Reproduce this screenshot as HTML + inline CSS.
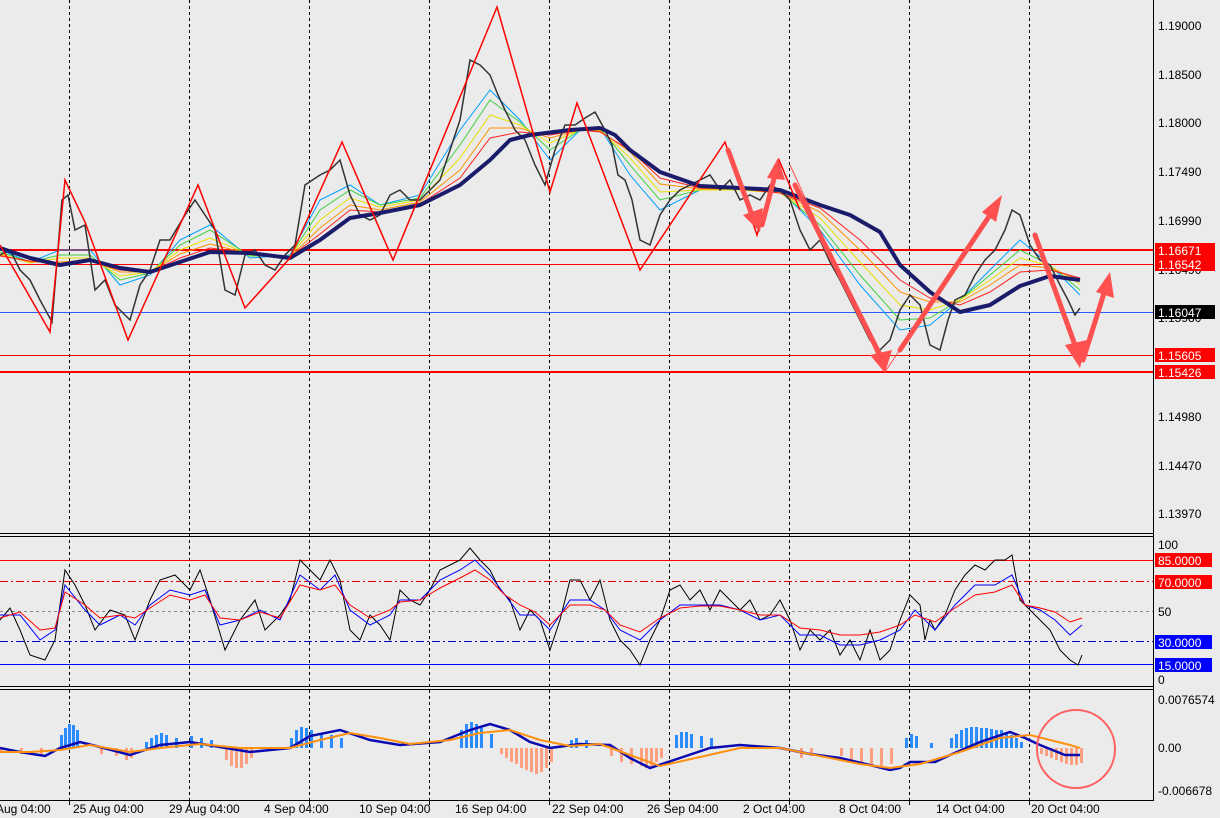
<!DOCTYPE html>
<html><head><meta charset="utf-8"><style>
html,body{margin:0;padding:0;background:#ebebeb;}
svg{display:block;font-family:"Liberation Sans",sans-serif;}
</style></head><body>
<svg width="1220" height="818" viewBox="0 0 1220 818" xmlns="http://www.w3.org/2000/svg">
<rect width="1220" height="818" fill="#ebebeb"/>
<!-- panel frames -->
<g stroke="#000" stroke-width="1" fill="none">
<line x1="0" y1="533.5" x2="1153" y2="533.5"/>
<line x1="0" y1="536.5" x2="1153" y2="536.5"/>
<line x1="0" y1="686.5" x2="1153" y2="686.5"/>
<line x1="0" y1="689.5" x2="1153" y2="689.5"/>
<line x1="0" y1="800.5" x2="1153" y2="800.5"/>
<line x1="1153.5" y1="0" x2="1153.5" y2="801"/>
</g>
<!-- vertical dotted grid -->
<g stroke="#000" stroke-width="1" stroke-dasharray="3,3">
<line x1="69.5" y1="0" x2="69.5" y2="800"/><line x1="189.5" y1="0" x2="189.5" y2="800"/>
<line x1="309.5" y1="0" x2="309.5" y2="800"/><line x1="429.5" y1="0" x2="429.5" y2="800"/>
<line x1="549.5" y1="0" x2="549.5" y2="800"/><line x1="669.5" y1="0" x2="669.5" y2="800"/>
<line x1="789.5" y1="0" x2="789.5" y2="800"/><line x1="909.5" y1="0" x2="909.5" y2="800"/>
<line x1="1029.5" y1="0" x2="1029.5" y2="800"/>
</g>
<!-- horizontal levels -->
<line x1="0" y1="250" x2="1153" y2="250" stroke="#f00" stroke-width="2"/>
<line x1="0" y1="264.5" x2="1153" y2="264.5" stroke="#f00" stroke-width="1"/>
<line x1="0" y1="312.5" x2="1153" y2="312.5" stroke="#2a5cff" stroke-width="1"/>
<line x1="0" y1="355.5" x2="1153" y2="355.5" stroke="#f00" stroke-width="1"/>
<line x1="0" y1="372" x2="1153" y2="372" stroke="#f00" stroke-width="2"/>
<!-- ribbon -->
<g fill="none" stroke-width="1">
<polyline stroke="#00a0ff" points="0,250 30,262 60,250 90,250 120,285 150,275 180,240 210,225 250,258 290,255 320,200 350,185 380,205 420,195 460,130 490,90 520,120 550,160 580,130 600,128 630,175 660,210 700,190 740,190 780,190 820,230 860,285 900,330 930,325 960,300 990,270 1020,240 1050,265 1080,295"/>
<polyline stroke="#40d040" points="0,252 30,262 60,255 90,255 120,280 150,273 180,245 210,230 250,256 290,256 320,210 350,190 380,205 420,198 460,145 490,100 520,122 550,150 580,130 600,128 630,165 660,200 700,190 740,190 780,192 820,225 860,275 900,320 930,318 960,300 990,275 1020,250 1050,265 1080,290"/>
<polyline stroke="#e8e000" points="0,254 30,263 60,258 90,258 120,276 150,272 180,250 210,238 250,255 290,256 320,220 350,198 380,207 420,200 460,158 490,115 520,125 550,143 580,130 600,130 630,158 660,192 700,190 740,190 780,193 820,218 860,262 900,305 930,310 960,300 990,280 1020,258 1050,266 1080,284"/>
<polyline stroke="#ff9000" points="0,255 30,262 60,262 90,260 120,272 150,272 180,254 210,244 250,254 290,257 320,228 350,205 380,210 420,202 460,170 490,128 520,128 550,138 580,130 600,131 630,152 660,184 700,189 740,189 780,193 820,212 860,250 900,292 930,302 960,302 990,285 1020,265 1050,268 1080,280"/>
<polyline stroke="#ff2020" points="0,256 30,261 60,264 90,261 120,270 150,272 180,258 210,248 250,253 290,257 320,234 350,210 380,212 420,204 460,178 490,138 520,132 550,135 580,130 600,132 630,150 660,178 700,188 740,189 780,193 820,208 860,240 900,280 930,298 960,305 990,292 1020,272 1050,270 1080,278"/>
</g>
<!-- price -->
<polyline fill="none" stroke="#333" stroke-width="1.5" points="0,255 10,250 20,270 30,280 40,300 52,322 62,200 68,195 75,230 85,225 95,290 105,280 115,305 130,320 140,285 150,270 160,240 170,240 185,215 195,200 205,215 215,230 225,290 235,295 245,255 255,250 265,265 275,270 285,255 295,245 305,185 320,175 330,170 340,160 350,195 360,215 370,220 380,215 390,195 400,190 410,200 420,200 430,190 440,180 450,150 460,120 470,60 480,65 490,75 498,95 505,110 515,130 525,140 535,165 545,185 555,150 565,125 575,125 585,118 595,112 605,130 612,145 618,175 625,180 632,200 640,240 650,245 660,215 670,200 680,190 690,185 700,180 710,175 720,190 730,180 740,200 750,195 760,200 770,185 780,190 790,200 800,230 810,250 820,240 830,262 840,280 850,300 860,320 870,340 880,350 890,340 900,310 910,295 920,305 930,345 940,350 948,320 955,300 965,295 975,275 985,260 995,250 1005,230 1012,210 1020,215 1030,245 1040,260 1050,265 1060,285 1068,300 1075,315 1080,308"/>
<!-- MA thick -->
<polyline fill="none" stroke="#1b1b6b" stroke-width="4" stroke-linejoin="round" points="0,248 30,258 60,265 90,260 120,268 150,272 180,262 210,252 250,253 290,258 320,240 350,218 380,213 420,205 460,185 490,160 510,140 530,135 570,130 600,128 615,135 630,150 660,172 700,186 740,188 780,190 820,205 850,215 880,232 900,265 930,292 960,312 990,305 1020,286 1050,276 1080,280"/>
<!-- zigzag -->
<polyline fill="none" stroke="#f00" stroke-width="1.5" points="0,245 50,332 65,180 85,222 128,340 198,185 245,308 290,258 342,142 393,260 497,7 550,192 577,103 640,270 725,142 757,235 779,160 800,210"/>
<!-- arrows -->
<g fill="#ff5050" stroke="#ff5050" stroke-width="5" stroke-linecap="round">
<line x1="728" y1="150" x2="752" y2="215"/><polygon points="743,215 760,232 763,208" stroke="none"/>
<line x1="762" y1="225" x2="775" y2="175"/><polygon points="767,178 778,158 785,180" stroke="none"/>
<line x1="795" y1="185" x2="880" y2="355"/><polygon points="870,355 885,373 892,350" stroke="none"/>
<line x1="900" y1="350" x2="990" y2="215"/><polygon points="982,212 1002,195 996,222" stroke="none"/>
<line x1="1035" y1="235" x2="1075" y2="345"/><polygon points="1065,345 1080,368 1087,340" stroke="none"/>
<line x1="1083" y1="360" x2="1105" y2="290"/><polygon points="1096,292 1110,272 1114,298" stroke="none"/>
</g>
<line x1="790" y1="165" x2="885" y2="372" stroke="#ff5050" stroke-width="1"/>
<line x1="885" y1="372" x2="1000" y2="200" stroke="#ff5050" stroke-width="1"/>
<!-- price axis labels -->
<g font-size="12" fill="#000">
<text x="1158" y="30">1.19000</text><text x="1158" y="79">1.18500</text>
<text x="1158" y="127">1.18000</text><text x="1158" y="176">1.17490</text>
<text x="1158" y="225">1.16990</text><text x="1158" y="274">1.16490</text>
<text x="1158" y="322">1.15980</text>
<text x="1158" y="421">1.14980</text><text x="1158" y="470">1.14470</text>
<text x="1158" y="518">1.13970</text>
</g>
<g font-size="12">
<rect x="1155" y="243" width="60" height="14" fill="#f00"/><text x="1158" y="255" fill="#fff">1.16671</text>
<rect x="1155" y="257" width="60" height="14" fill="#f00"/><text x="1158" y="269" fill="#fff">1.16542</text>
<rect x="1155" y="305" width="60" height="14" fill="#000"/><text x="1158" y="317" fill="#fff">1.16047</text>
<rect x="1155" y="348" width="60" height="14" fill="#f00"/><text x="1158" y="360" fill="#fff">1.15605</text>
<rect x="1155" y="365" width="60" height="14" fill="#f00"/><text x="1158" y="377" fill="#fff">1.15426</text>
</g>
<!-- stochastic -->
<line x1="0" y1="560.5" x2="1153" y2="560.5" stroke="#f00"/>
<line x1="0" y1="581.5" x2="1153" y2="581.5" stroke="#e00000" stroke-dasharray="8,3,2,3"/>
<line x1="0" y1="611.5" x2="1153" y2="611.5" stroke="#888" stroke-dasharray="3,3"/>
<line x1="0" y1="641.5" x2="1153" y2="641.5" stroke="#0000c0" stroke-dasharray="8,3,2,3"/>
<line x1="0" y1="664.5" x2="1153" y2="664.5" stroke="#0000ff"/>
<polyline fill="none" stroke="#000" stroke-width="1" points="0,620 10,608 20,630 30,655 45,660 55,640 65,570 75,585 85,605 95,630 110,610 125,615 135,640 150,600 160,580 175,575 190,590 200,570 210,600 225,650 240,620 255,600 265,630 280,615 290,600 300,560 310,570 320,580 330,560 340,580 350,630 360,640 370,615 380,625 390,640 400,590 410,600 420,605 430,590 440,570 450,565 460,560 470,548 480,560 490,570 500,590 510,600 520,630 530,610 540,620 550,650 560,620 570,580 580,580 590,600 600,580 610,620 620,640 630,650 640,665 650,640 660,620 670,590 680,585 690,600 700,590 710,610 720,590 730,600 740,610 750,600 760,620 770,615 780,600 790,620 800,650 810,630 820,640 830,630 840,655 850,640 860,660 870,630 880,660 890,650 900,620 910,595 920,605 925,640 930,620 935,630 945,615 955,590 965,575 975,565 985,570 995,560 1005,560 1012,555 1020,600 1030,610 1040,620 1050,630 1060,650 1070,660 1078,665 1082,655"/>
<polyline fill="none" stroke="#0000ff" stroke-width="1" points="0,615 20,615 40,640 55,630 65,585 85,610 100,625 120,615 135,625 150,605 170,590 190,595 205,590 220,625 240,620 260,610 280,620 300,575 320,590 335,575 350,610 370,625 390,615 400,600 420,600 440,580 460,570 475,560 490,575 505,595 520,615 535,615 550,630 570,600 590,600 605,610 620,630 640,640 660,620 680,605 700,605 720,605 740,610 760,620 780,615 800,635 820,635 840,645 860,645 880,640 900,630 915,610 935,630 955,605 975,585 995,585 1012,575 1025,605 1040,610 1055,620 1070,635 1082,625"/>
<polyline fill="none" stroke="#f00" stroke-width="1" points="0,618 20,612 40,630 55,628 65,592 85,605 100,618 120,615 135,618 150,608 170,595 190,600 205,595 220,618 240,620 260,612 280,618 300,585 320,590 335,585 350,605 370,618 390,610 400,602 420,600 440,588 460,578 475,570 490,580 505,595 520,605 535,612 550,625 570,605 590,605 605,610 620,625 640,632 660,618 680,608 700,606 720,606 740,610 760,615 780,615 800,628 820,630 840,635 860,635 880,632 900,625 915,615 935,622 955,608 975,595 995,592 1012,585 1025,605 1040,608 1055,612 1070,622 1082,618"/>
<g font-size="12">
<text x="1158" y="549">100</text>
<rect x="1155" y="553" width="57" height="14" fill="#f00"/><text x="1158" y="565" fill="#fff">85.0000</text>
<rect x="1155" y="575" width="57" height="14" fill="#f00"/><text x="1158" y="587" fill="#fff">70.0000</text>
<text x="1158" y="616">50</text>
<rect x="1155" y="635" width="57" height="14" fill="#0000ff"/><text x="1158" y="647" fill="#fff">30.0000</text>
<rect x="1155" y="658" width="57" height="14" fill="#0000ff"/><text x="1158" y="670" fill="#fff">15.0000</text>
<text x="1158" y="684">0</text>
</g>
<!-- MACD histogram -->
<g fill="#2b8cff">
<rect x="60" y="735" width="3" height="13"/><rect x="64" y="728" width="3" height="20"/><rect x="68" y="724" width="3" height="24"/><rect x="72" y="725" width="3" height="23"/><rect x="76" y="730" width="3" height="18"/>
<rect x="145" y="742" width="3" height="6"/><rect x="150" y="738" width="3" height="10"/><rect x="155" y="735" width="3" height="13"/><rect x="160" y="733" width="3" height="15"/><rect x="165" y="735" width="3" height="13"/><rect x="175" y="738" width="3" height="10"/><rect x="190" y="736" width="3" height="12"/><rect x="200" y="738" width="3" height="10"/><rect x="210" y="740" width="3" height="8"/>
<rect x="290" y="738" width="3" height="10"/><rect x="295" y="730" width="3" height="18"/><rect x="300" y="727" width="3" height="21"/><rect x="305" y="728" width="3" height="20"/><rect x="310" y="730" width="3" height="18"/><rect x="320" y="733" width="3" height="15"/><rect x="330" y="735" width="3" height="13"/><rect x="340" y="738" width="3" height="10"/>
<rect x="460" y="730" width="3" height="18"/><rect x="465" y="724" width="3" height="24"/><rect x="470" y="722" width="3" height="26"/><rect x="475" y="724" width="3" height="24"/><rect x="480" y="728" width="3" height="20"/><rect x="490" y="734" width="3" height="14"/>
<rect x="570" y="740" width="3" height="8"/><rect x="575" y="738" width="3" height="10"/><rect x="585" y="740" width="3" height="8"/>
<rect x="675" y="735" width="3" height="13"/><rect x="680" y="732" width="3" height="16"/><rect x="685" y="732" width="3" height="16"/><rect x="690" y="734" width="3" height="14"/><rect x="700" y="736" width="3" height="12"/><rect x="710" y="738" width="3" height="10"/>
<rect x="905" y="738" width="3" height="10"/><rect x="910" y="734" width="3" height="14"/><rect x="915" y="736" width="3" height="12"/><rect x="930" y="743" width="3" height="5"/>
<rect x="950" y="738" width="3" height="10"/><rect x="955" y="734" width="3" height="14"/><rect x="960" y="730" width="3" height="18"/><rect x="965" y="728" width="3" height="20"/><rect x="970" y="727" width="3" height="21"/><rect x="975" y="727" width="3" height="21"/><rect x="980" y="728" width="3" height="20"/><rect x="985" y="728" width="3" height="20"/><rect x="990" y="729" width="3" height="19"/><rect x="995" y="730" width="3" height="18"/><rect x="1000" y="730" width="3" height="18"/><rect x="1005" y="732" width="3" height="16"/><rect x="1010" y="735" width="3" height="13"/><rect x="1015" y="738" width="3" height="10"/><rect x="1020" y="742" width="3" height="6"/>
</g>
<g fill="#ffa080">
<rect x="0" y="748" width="3" height="4"/><rect x="20" y="748" width="3" height="6"/><rect x="40" y="748" width="3" height="8"/>
<rect x="100" y="748" width="3" height="6"/><rect x="115" y="748" width="3" height="8"/><rect x="125" y="748" width="3" height="12"/><rect x="130" y="748" width="3" height="10"/>
<rect x="225" y="748" width="3" height="12"/><rect x="230" y="748" width="3" height="18"/><rect x="235" y="748" width="3" height="20"/><rect x="240" y="748" width="3" height="20"/><rect x="245" y="748" width="3" height="16"/><rect x="250" y="748" width="3" height="10"/>
<rect x="500" y="748" width="3" height="6"/><rect x="505" y="748" width="3" height="10"/><rect x="510" y="748" width="3" height="14"/><rect x="515" y="748" width="3" height="16"/><rect x="520" y="748" width="3" height="20"/><rect x="525" y="748" width="3" height="22"/><rect x="530" y="748" width="3" height="24"/><rect x="535" y="748" width="3" height="26"/><rect x="540" y="748" width="3" height="24"/><rect x="545" y="748" width="3" height="20"/><rect x="550" y="748" width="3" height="14"/>
<rect x="610" y="748" width="3" height="8"/><rect x="620" y="748" width="3" height="14"/><rect x="630" y="748" width="3" height="16"/><rect x="640" y="748" width="3" height="18"/><rect x="645" y="748" width="3" height="20"/><rect x="650" y="748" width="3" height="18"/><rect x="655" y="748" width="3" height="14"/><rect x="660" y="748" width="3" height="10"/>
<rect x="800" y="748" width="3" height="10"/><rect x="810" y="748" width="3" height="8"/><rect x="840" y="748" width="3" height="8"/><rect x="850" y="748" width="3" height="12"/><rect x="860" y="748" width="3" height="16"/><rect x="870" y="748" width="3" height="18"/><rect x="880" y="748" width="3" height="18"/><rect x="890" y="748" width="3" height="16"/>
<rect x="1040" y="748" width="3" height="6"/><rect x="1045" y="748" width="3" height="8"/><rect x="1050" y="748" width="3" height="10"/><rect x="1055" y="748" width="3" height="12"/><rect x="1060" y="748" width="3" height="14"/><rect x="1065" y="748" width="3" height="16"/><rect x="1070" y="748" width="3" height="17"/><rect x="1075" y="748" width="3" height="17"/><rect x="1080" y="748" width="3" height="15"/>
</g>
<polyline fill="none" stroke="#0a0ab0" stroke-width="2.5" points="0,748 20,752 45,756 60,748 80,742 100,747 130,755 160,745 190,742 220,747 250,752 290,748 310,736 340,730 370,740 400,745 440,742 470,730 490,724 510,730 530,742 550,748 580,744 610,745 630,758 650,768 680,758 710,748 740,745 780,748 810,754 840,758 870,765 890,770 900,768 910,762 935,762 950,755 980,742 1010,732 1025,738 1040,745 1065,755 1080,755"/>
<polyline fill="none" stroke="#ff9010" stroke-width="2" points="0,752 30,752 60,750 90,745 130,752 160,748 200,744 240,748 290,748 320,740 350,733 380,738 410,744 450,740 480,733 510,730 540,740 570,746 600,744 630,755 660,766 700,757 740,748 780,748 820,756 860,764 890,768 920,764 960,752 1000,738 1030,735 1050,740 1070,745 1080,748"/>
<circle cx="1076" cy="749" r="39" fill="none" stroke="#ff6060" stroke-width="2"/>
<g font-size="12">
<text x="1158" y="704">0.0076574</text>
<text x="1158" y="752">0.00</text>
<text x="1158" y="795">-0.006678</text>
</g>
<!-- time axis -->
<g font-size="12" fill="#000">
<text x="-4" y="813">Aug 04:00</text>
<text x="73" y="813">25 Aug 04:00</text>
<text x="169" y="813">29 Aug 04:00</text>
<text x="264" y="813">4 Sep 04:00</text>
<text x="359" y="813">10 Sep 04:00</text>
<text x="455" y="813">16 Sep 04:00</text>
<text x="552" y="813">22 Sep 04:00</text>
<text x="647" y="813">26 Sep 04:00</text>
<text x="743" y="813">2 Oct 04:00</text>
<text x="839" y="813">8 Oct 04:00</text>
<text x="936" y="813">14 Oct 04:00</text>
<text x="1031" y="813">20 Oct 04:00</text>
</g>
<g stroke="#000"><line x1="69.5" y1="800" x2="69.5" y2="805"/><line x1="189.5" y1="800" x2="189.5" y2="805"/><line x1="309.5" y1="800" x2="309.5" y2="805"/><line x1="429.5" y1="800" x2="429.5" y2="805"/><line x1="549.5" y1="800" x2="549.5" y2="805"/><line x1="669.5" y1="800" x2="669.5" y2="805"/><line x1="789.5" y1="800" x2="789.5" y2="805"/><line x1="909.5" y1="800" x2="909.5" y2="805"/><line x1="1029.5" y1="800" x2="1029.5" y2="805"/></g>
</svg>
</body></html>
